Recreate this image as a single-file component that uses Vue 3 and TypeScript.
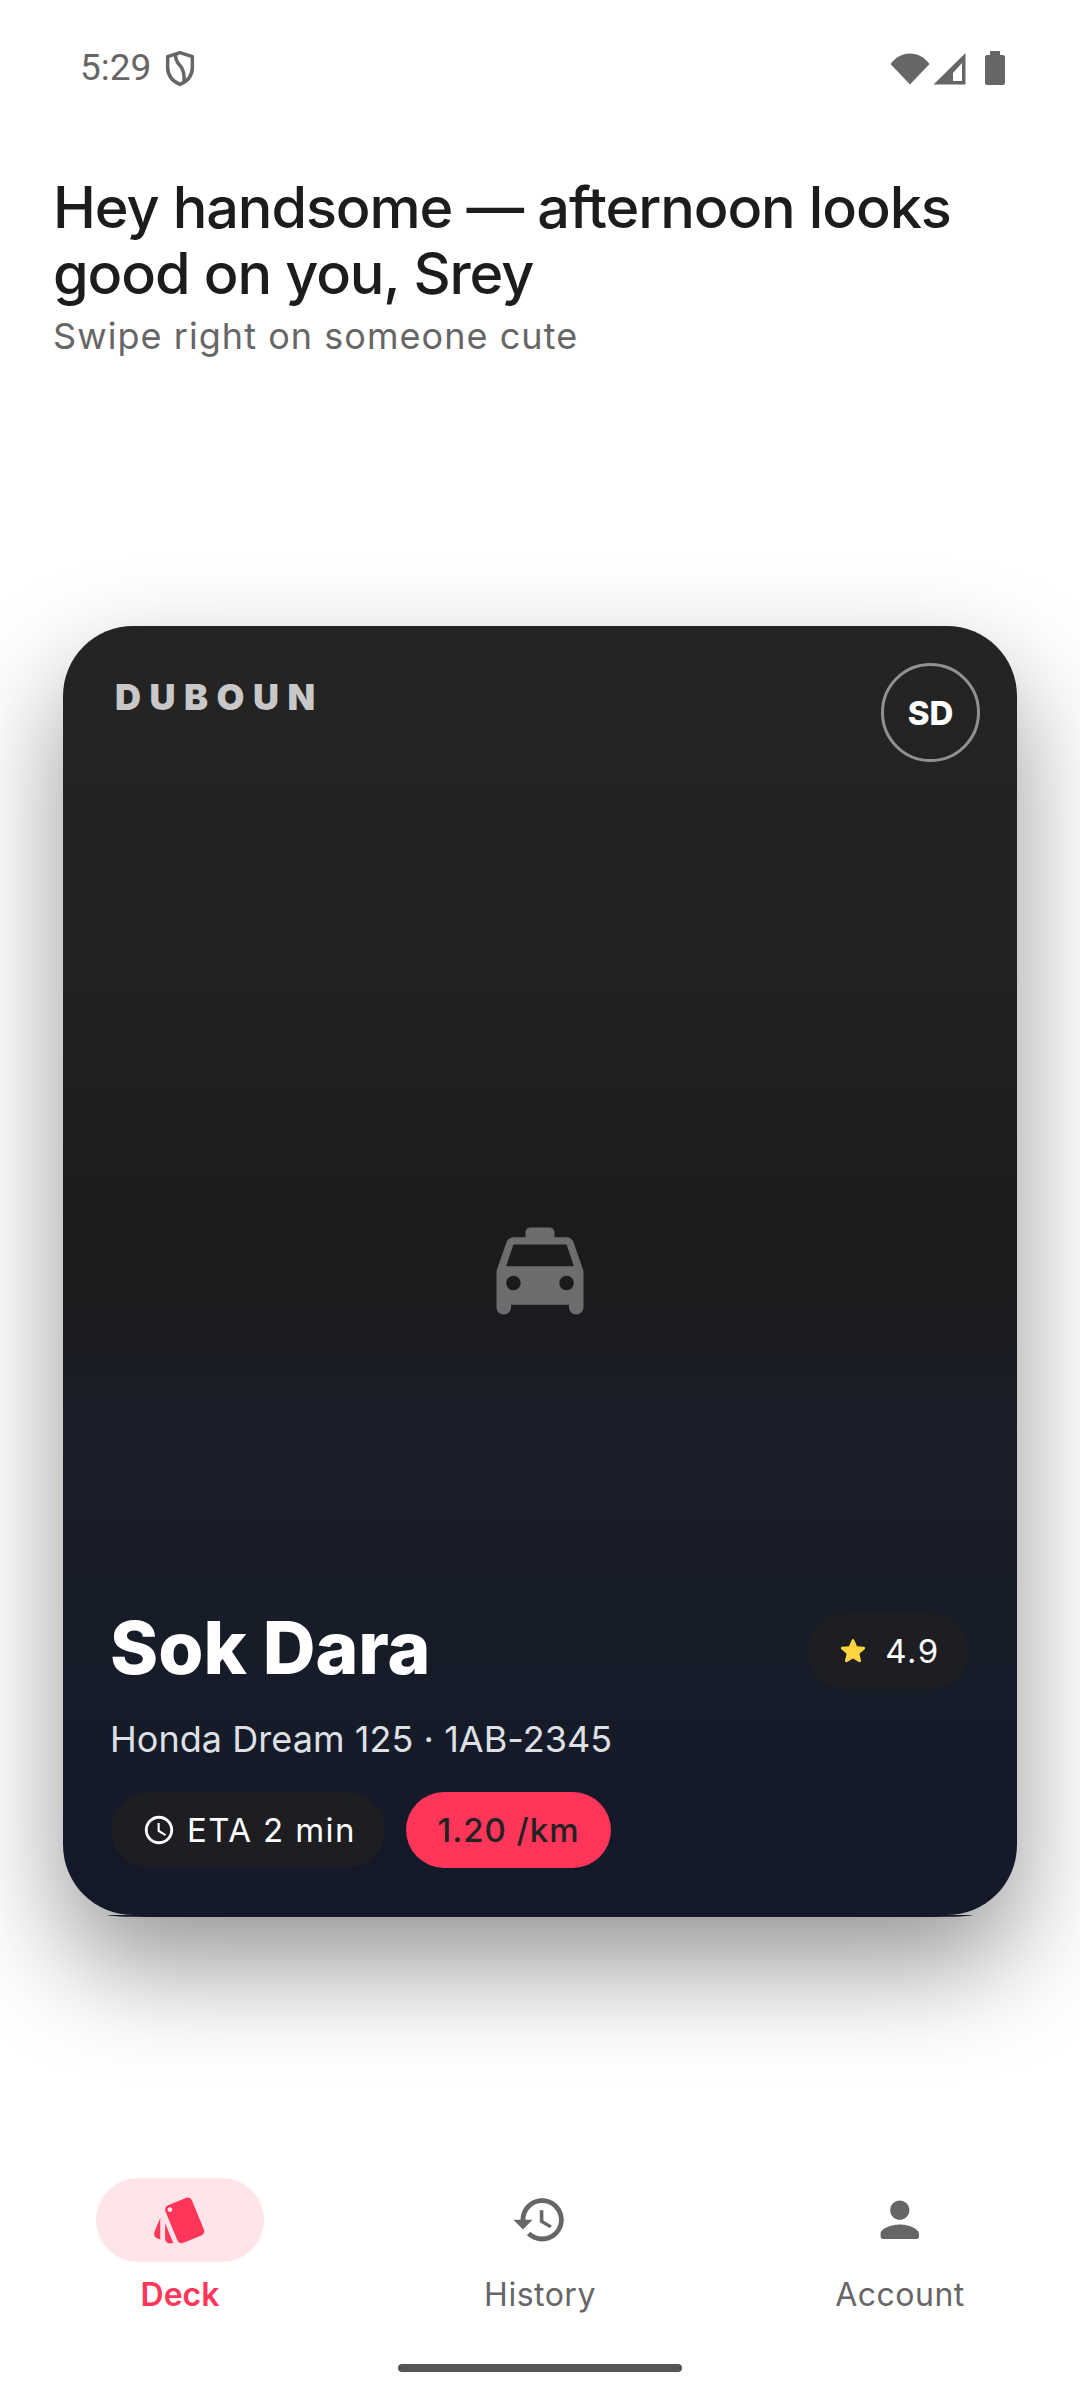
<script setup lang="ts">
interface NavItem { label: string; active: boolean; path: string }
const navItems: NavItem[] = [
  { label: 'Deck', active: true, path: 'M2.53 19.65l1.34.56v-9.03l-2.43 5.86c-.41 1.02.08 2.19 1.09 2.61zm19.5-3.7L17.07 3.98c-.31-.75-1.04-1.21-1.81-1.23-.26 0-.53.04-.79.15L7.1 5.95c-.75.31-1.21 1.03-1.23 1.8-.01.27.04.54.15.8l4.96 11.97c.31.76 1.05 1.22 1.83 1.23.26 0 .52-.05.77-.15l7.36-3.05c1.02-.42 1.51-1.59 1.09-2.6zM7.88 8.75c-.55 0-1-.45-1-1s.45-1 1-1 1 .45 1 1-.45 1-1 1zm-2 11c0 1.1.9 2 2 2h1.45l-3.45-8.34v6.34z' },
  { label: 'History', active: false, path: 'M13 3c-4.97 0-9 4.03-9 9H1l3.89 3.89.07.14L9 12H6c0-3.87 3.13-7 7-7s7 3.13 7 7-3.13 7-7 7c-1.93 0-3.68-.79-4.94-2.06l-1.42 1.42C8.27 19.99 10.51 21 13 21c4.97 0 9-4.03 9-9s-4.03-9-9-9zm-1 5v5l4.28 2.54.72-1.21-3.5-2.08V8H12z' },
  { label: 'Account', active: false, path: 'M12 12c2.21 0 4-1.79 4-4s-1.79-4-4-4-4 1.79-4 4 1.79 4 4 4zm0 2c-2.67 0-8 1.34-8 4v1c0 .55.45 1 1 1h14c.55 0 1-.45 1-1v-1c0-2.66-5.33-4-8-4z' },
]
</script>

<template>
  <div class="page">
    <div class="status">
      <div class="status-left">
        <span class="time">5:29</span>
        <svg class="shield" width="32" height="37" viewBox="0 0 30 36" fill="none" stroke="#666" stroke-width="3.4">
          <path d="M15 2.500 3 6.500v10.500c0 8 5 13.500 12 16.500 7-3 12-8.500 12-16.500V6.500z" stroke-linejoin="round" />
          <path d="M11 4c-1 5 1 8 4 11s4.500 7 4 17" />
        </svg>
      </div>
      <div class="status-right">
        <svg width="40" height="33" viewBox="0 0 40 33"><path d="M20 32.500 0.500 12C6 5 12 1.500 20 1.500S34 5 39.500 12z" fill="#666" /></svg>
        <svg width="33" height="33" viewBox="0 0 33 33"><path fill-rule="evenodd" d="M32.500 1v31.500H0.500zM29 11l-9 10v8h9z" fill="#666" /></svg>
        <svg class="battery" width="20" height="34" viewBox="0 0 20 34"><path d="M6 0h8c.600 0 1 .400 1 1v3h3c1.100 0 2 .900 2 2v26c0 1.100-.900 2-2 2H2c-1.100 0-2-.900-2-2V6c0-1.100.900-2 2-2h3V1c0-.600.400-1 1-1z" fill="#666" /></svg>
      </div>
    </div>

    <header class="greet">
      <h1>Hey handsome — afternoon looks good on you, Srey</h1>
      <p>Swipe right on someone cute</p>
    </header>

    <main class="stage">
      <section class="card">
        <div class="taxi">
          <svg width="116" height="116" viewBox="0 0 24 24"><path fill="currentColor" d="M18.920 6.010C18.720 5.420 18.160 5 17.500 5H15V4c0-.55-.45-1-1-1h-4c-.55 0-1 .45-1 1v1H6.500c-.66 0-1.210.42-1.420 1.010L3 12v7.500c0 .83.67 1.500 1.500 1.500S6 20.330 6 19.500V19h12v.5c0 .82.67 1.500 1.500 1.500.82 0 1.500-.67 1.500-1.500V12l-2.080-5.990zM6.500 16c-.83 0-1.500-.67-1.500-1.500S5.670 13 6.500 13s1.500.67 1.500 1.500S7.330 16 6.500 16zm11 0c-.83 0-1.500-.67-1.500-1.500s.67-1.500 1.500-1.500 1.500.67 1.500 1.500-.67 1.500-1.500 1.500zM5 11l1.500-4.500h11L19 11H5z" /></svg>
        </div>
        <div class="card-top">
          <span class="brand">DUBOUN</span>
          <span class="avatar">SD</span>
        </div>
        <div class="card-bottom">
          <div class="name-row">
            <h2>Sok Dara</h2>
            <span class="rating">
              <svg width="34" height="34" viewBox="0 0 24 24"><path fill="#ffd23f" d="M12 17.270l4.150 2.510c.76.46 1.690-.22 1.490-1.080l-1.100-4.720 3.670-3.180c.67-.58.31-1.680-.57-1.750l-4.830-.41-1.890-4.460c-.34-.81-1.500-.81-1.840 0L9.190 8.630l-4.830.41c-.88.07-1.240 1.170-.57 1.750l3.670 3.180-1.100 4.720c-.2.86.73 1.540 1.490 1.080l4.150-2.500z" /></svg>
              <span>4.9</span>
            </span>
          </div>
          <p class="vehicle">Honda Dream 125 · 1AB-2345</p>
          <div class="chips">
            <span class="chip eta">
              <svg width="34" height="34" viewBox="0 0 24 24"><path fill="currentColor" d="M11.990 2C6.470 2 2 6.480 2 12s4.470 10 9.990 10C17.520 22 22 17.520 22 12S17.520 2 11.990 2zM12 20c-4.420 0-8-3.580-8-8s3.580-8 8-8 8 3.580 8 8-3.580 8-8 8zm.5-13H11v6l5.250 3.150.75-1.230-4.500-2.670z" /></svg>
              <span>ETA 2 min</span>
            </span>
            <span class="chip price">1.20 /km</span>
          </div>
        </div>
      </section>
    </main>

    <nav class="nav">
      <div v-for="item in navItems" :key="item.label" class="nav-item" :class="{ active: item.active }">
        <span class="nav-icon">
          <svg width="57.600" height="57.600" viewBox="0 0 24 24"><path fill="currentColor" :d="item.path" /></svg>
        </span>
        <span class="nav-label">{{ item.label }}</span>
      </div>
    </nav>
    <div class="home-wrap"><span class="home"></span></div>
  </div>
</template>

<style>
html, body { margin: 0; background: #fff; }
</style>

<style scoped>
.page {
  width: 1080px;
  height: 2400px;
  background: #fff;
  display: flex;
  flex-direction: column;
  overflow: hidden;
  font-family: Inter, "Noto Sans", sans-serif;
}
.status {
  height: 136px;
  box-sizing: border-box;
  padding: 50px 75px 0 80px;
  display: flex;
  justify-content: space-between;
  align-items: flex-start;
  flex: none;
}
.status-left { display: flex; align-items: center; gap: 13px; height: 36px; }
.time { font-family: Roboto, sans-serif; font-size: 37px; color: #666; line-height: 36px; }
.status-right { display: flex; align-items: center; gap: 3px; height: 36px; }
.battery { margin-left: 16px; }
.greet { padding: 38px 53px 0; flex: none; }
.greet h1 {
  margin: 0;
  font-size: 57.6px;
  line-height: 66px;
  font-weight: 500;
  letter-spacing: -1.1px;
  color: #1c1c1e;
}
.greet p {
  margin: 8px 0 0;
  font-size: 36px;
  line-height: 44px;
  letter-spacing: 1.05px;
  color: #666;
}
.stage { flex: none; padding: 0 63px; margin-top: 268px; }
.card {
  position: relative;
  height: 1289px;
  box-sizing: border-box;
  border-radius: 70px;
  background: linear-gradient(180deg, #242424 0%, #222222 25%, #1b1b1b 50%, #1a1e29 62%, #131929 100%);
  box-shadow: 0 50px 110px rgba(0, 0, 0, 0.42);
  display: flex;
  flex-direction: column;
  justify-content: space-between;
  color: #fff;
}
.card::after {
  content: "";
  position: absolute;
  left: 45px;
  right: 45px;
  bottom: -2px;
  height: 2px;
  background: #131929;
  border-radius: 0 0 40px 40px / 0 0 2px 2px;
}
.taxi {
  position: absolute;
  inset: 0;
  display: flex;
  align-items: center;
  justify-content: center;
  color: rgba(255, 255, 255, 0.36);
}
.card-top {
  position: relative;
  display: flex;
  justify-content: space-between;
  align-items: flex-start;
  padding: 37px 37px 0 52px;
}
.brand {
  font-size: 36px;
  line-height: 42px;
  font-weight: 900;
  letter-spacing: 8.5px;
  color: #c8c8c8;
  margin-top: 13px;
}
.avatar {
  width: 99px;
  height: 99px;
  box-sizing: border-box;
  border: 3px solid rgba(255, 255, 255, 0.5);
  border-radius: 50%;
  display: flex;
  align-items: center;
  justify-content: center;
  font-size: 33px;
  font-weight: 800;
  color: #fff;
}
.card-bottom { position: relative; padding: 0 48px 47px; }
.name-row { display: flex; justify-content: space-between; align-items: center; }
.name-row h2 {
  margin: 0 0 0 -1px;
  font-size: 73px;
  line-height: 88px;
  font-weight: 800;
  color: #fff;
}
.rating {
  height: 76px;
  width: 162px;
  box-sizing: border-box;
  border-radius: 38px;
  background: #1c1e22;
  display: flex;
  align-items: center;
  justify-content: center;
  gap: 15px;
  font-size: 33px;
  letter-spacing: 1.5px;
  margin-top: 6px;
}
.vehicle {
  margin: 25px 0 0 -1px;
  font-size: 36px;
  line-height: 44px;
  letter-spacing: 0.05px;
  color: #dfe0e4;
}
.chips { display: flex; gap: 21px; margin-top: 31px; }
.chip {
  height: 76px;
  border-radius: 38px;
  display: flex;
  align-items: center;
  justify-content: center;
  box-sizing: border-box;
  font-size: 33px;
  letter-spacing: 1.4px;
}
.eta { width: 274px; background: #1c1e22; gap: 11px; color: #fff; padding-left: 2px; }
.price { width: 205px; background: #ff3559; color: #222; font-weight: 500; letter-spacing: 1px; }
.nav {
  margin-top: auto;
  display: grid;
  grid-template-columns: repeat(3, 1fr);
  flex: none;
}
.nav-item {
  display: flex;
  flex-direction: column;
  align-items: center;
  color: #666;
}
.nav-icon {
  width: 168px;
  height: 84px;
  border-radius: 42px;
  display: flex;
  align-items: center;
  justify-content: center;
}
.active .nav-icon { background: #ffe5ea; }
.active { color: #ff3559; }
.nav-label {
  font-size: 32px;
  line-height: 40px;
  margin-top: 13px;
  letter-spacing: 0.5px;
}
.active .nav-label { font-weight: 600; letter-spacing: 0; }
.home-wrap { height: 85px; display: flex; justify-content: center; align-items: flex-start; flex: none; box-sizing: border-box; }
.home { width: 284px; height: 8px; border-radius: 4px; background: #555; margin-top: 49px; }
</style>
